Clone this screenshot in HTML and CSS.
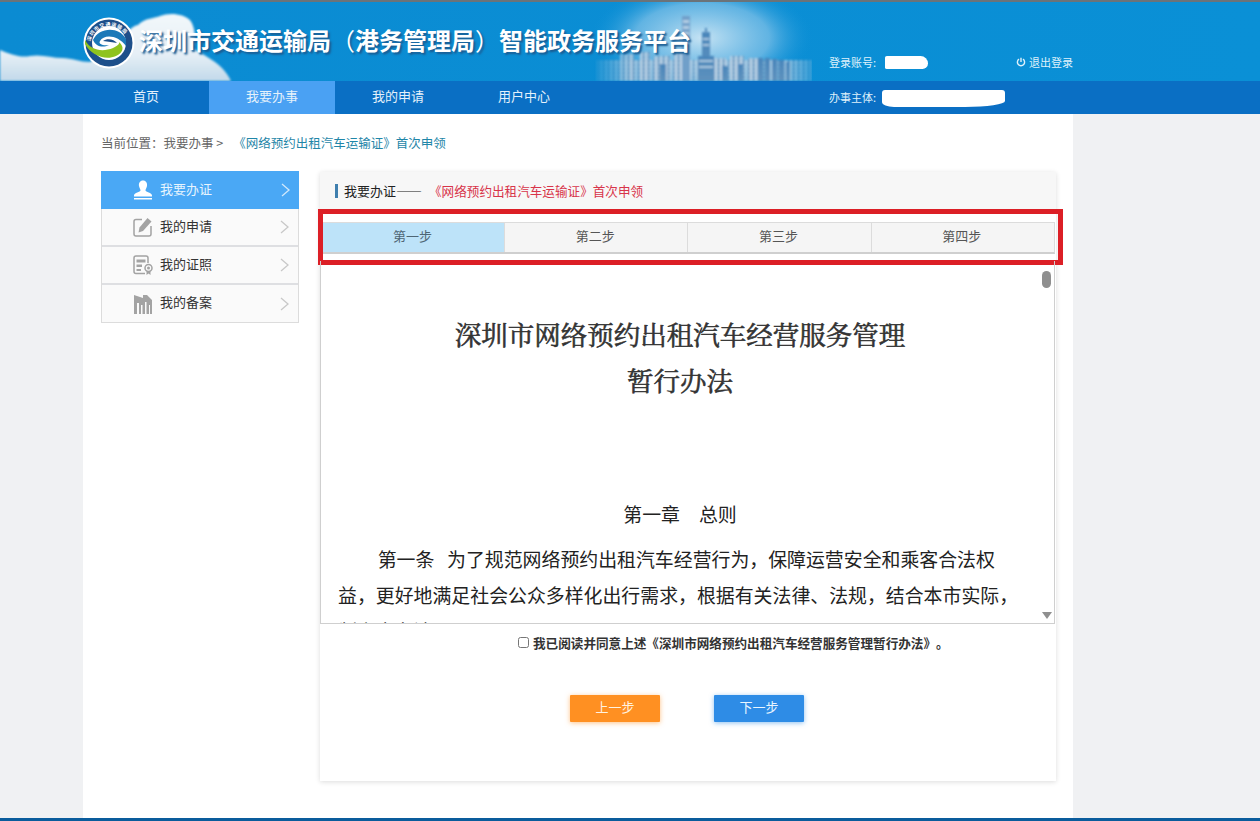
FILE: index.html
```html
<!DOCTYPE html>
<html lang="zh-CN">
<head>
<meta charset="utf-8">
<title>深圳市交通运输局（港务管理局）智能政务服务平台</title>
<link rel="stylesheet" href="styles.css">
</head>
<body>
<header class="masthead">
  <svg class="scenery" viewBox="0 0 1260 79" aria-hidden="true">
    <defs>
      <linearGradient id="cloud" x1="0" y1="0" x2="0" y2="1">
        <stop offset="0" stop-color="#f2f7fa"/>
        <stop offset="0.6" stop-color="#e6eff6"/>
        <stop offset="1" stop-color="#c2d9ea"/>
      </linearGradient>
      <radialGradient id="glow" cx="0.5" cy="0.5" r="0.5">
        <stop offset="0" stop-color="#cfe7f5" stop-opacity="0.95"/>
        <stop offset="0.6" stop-color="#86c4e9" stop-opacity="0.7"/>
        <stop offset="1" stop-color="#0a8fd6" stop-opacity="0"/>
      </radialGradient>
      <linearGradient id="tower" x1="0" y1="0" x2="0" y2="1">
        <stop offset="0" stop-color="#4a86bb"/>
        <stop offset="1" stop-color="#5f92bd"/>
      </linearGradient>
      <linearGradient id="fade" x1="590" y1="0" x2="812" y2="0" gradientUnits="userSpaceOnUse">
        <stop offset="0" stop-color="#000"/>
        <stop offset="0.2" stop-color="#fff"/>
        <stop offset="0.88" stop-color="#fff"/>
        <stop offset="1" stop-color="#555"/>
      </linearGradient>
      <mask id="cityfade" maskUnits="userSpaceOnUse" x="590" y="0" width="222" height="79"><rect x="590" y="0" width="222" height="79" fill="url(#fade)"/></mask>
      <pattern id="windows" width="5" height="4" patternUnits="userSpaceOnUse">
        <rect width="5" height="4" fill="#8db2d2"/>
        <rect x="0" width="2" height="4" fill="#c4d8e8"/>
        <rect x="3" y="2" width="1.500" height="2" fill="#5f8fb8"/>
      </pattern>
      <filter id="soft"><feGaussianBlur stdDeviation="0.8"/></filter>
      <filter id="softer"><feGaussianBlur stdDeviation="1.200"/></filter>
    </defs>
    <path class="cloud-shape" filter="url(#softer)" d="M0 48 C10 52 20 56 30 54 C42 52 52 56 62 56 C72 56 80 60 90 60 L120 40 C126 30 132 24 138 23 C144 16 156 16 160 14 C170 10 184 12 190 18 C196 26 196 40 192 46 C202 52 214 58 222 66 C226 70 229 75 231 79 L0 79 Z"/>
    <ellipse class="glow" cx="702" cy="36" rx="112" ry="58"/>
    <g filter="url(#soft)" mask="url(#cityfade)">
      <rect class="city-band" x="596" y="58" width="216" height="21"/>
      <g class="city-far">
        <rect x="620" y="52" width="14" height="27"/><rect x="640" y="50" width="10" height="29"/>
        <rect x="654" y="54" width="16" height="25"/><rect x="674" y="50" width="8" height="29"/>
        <rect x="714" y="56" width="12" height="23"/><rect x="730" y="54" width="14" height="25"/>
        <rect x="748" y="56" width="10" height="23"/>
      </g>
      <rect class="tower-light" x="682" y="14" width="8" height="65"/>
      <g class="city-near">
        <rect x="702" y="30" width="8" height="49"/><rect x="705" y="26" width="2" height="5"/>
        <rect x="698" y="54" width="16" height="25"/><rect x="660" y="62" width="6" height="17"/>
        <rect x="722" y="64" width="6" height="15"/><rect x="738" y="62" width="5" height="17"/>
        <rect x="758" y="56" width="5" height="23"/><rect x="765" y="56" width="5" height="23"/>
        <rect x="772" y="57" width="5" height="22"/><rect x="779" y="58" width="5" height="21"/>
        <rect x="786" y="60" width="4" height="19"/>
      </g>
      <path class="roofs" d="M683 18h6v3h-6zM683 24h6v3h-6zM683 30h6v3h-6zM703 36h6v2h-6zM703 42h6v2h-6zM699 58h14v2h-14zM699 64h14v2h-14z"/>
    </g>
  </svg>
  <div class="masthead-inner">
    <svg class="logo" viewBox="0 0 52 52" role="img" aria-label="徽标">
      <defs><path id="ring" d="M7 28 A19 19 0 0 1 45 28"/></defs>
      <circle cx="26" cy="26" r="25.500" fill="#fff"/>
      <circle cx="26" cy="26" r="23.500" fill="#1d4f8a"/>
      <circle cx="26" cy="26" r="17" fill="#fff"/>
      <text class="logo-text"><textPath href="#ring" startOffset="6%">深圳市交通运输局</textPath></text>
      <path d="M10 23 C16 10 36 9 43 22 L43 29 C35 18 21 17 17 24 C15 27 20 29 26 28 C20 31 13 30 10 23 Z" fill="#1b79b8"/>
      <path d="M2 23 C8 34 20 35 30 31 C34 29 37 27 36 25 C42 30 40 36 33 39 C22 44 8 38 2 27 Z" fill="#8fc31f"/>
      <path d="M20 24 C24 21 31 22 34 26 C30 25 25 25 20 24 Z" fill="#1d4f8a"/>
    </svg>
    <h1 class="site-title">深圳市交通运输局<span class="paren">（</span>港务管理局<span class="paren">）</span>智能政务服务平台</h1>
    <div class="account">
      <span class="account-id">登录账号:<span class="mask mask-id"></span></span>
      <a class="logout">
        <svg class="power" viewBox="0 0 10 10" aria-hidden="true"><path d="M3 2.200 A3.600 3.600 0 1 0 7 2.200 M5 .8 V5"/></svg>退出登录</a>
    </div>
  </div>
</header>

<nav class="mainnav">
  <div class="mainnav-inner">
    <a class="nav-item">首页</a>
    <a class="nav-item is-active">我要办事</a>
    <a class="nav-item">我的申请</a>
    <a class="nav-item">用户中心</a>
    <div class="subject">办事主体:<span class="mask mask-subject"></span></div>
  </div>
</nav>

<main class="page">
  <div class="breadcrumb">当前位置：我要办事 &gt;<a class="crumb-link">《网络预约出租汽车运输证》首次申领</a></div>
  <div class="columns">
    <aside class="sidemenu">
      <a class="side-item is-active">
        <svg class="side-icon" viewBox="0 0 20 20" aria-hidden="true"><path class="fill-white" d="M10 0.500 C13 0.500 14.500 3 14 6 C13.700 8 12.500 9 12.500 10.500 C12.500 12 19 12.500 19 15.500 L19 16.500 L1 16.500 L1 15.500 C1 12.500 7.500 12 7.500 10.500 C7.500 9 6.300 8 6 6 C5.500 3 7 .5 10 .5 Z M1 18 H19 V19.500 H1 Z"/></svg>
        <span>我要办证</span>
        <svg class="chev" viewBox="0 0 9 14" aria-hidden="true"><path d="M1 1 L8 7 L1 13"/></svg>
      </a>
      <a class="side-item">
        <svg class="side-icon" viewBox="0 0 20 20" aria-hidden="true"><path class="line" d="M9 2.500 H3 Q1 2.500 1 4.500 V17 Q1 19 3 19 H16 Q18 19 18 17 V9"/><path class="fill-gray" d="M14.500 1 L18.500 4.500 L10 14 L5.500 15.500 L6.500 10.500 Z"/></svg>
        <span>我的申请</span>
        <svg class="chev" viewBox="0 0 9 14" aria-hidden="true"><path d="M1 1 L8 7 L1 13"/></svg>
      </a>
      <a class="side-item">
        <svg class="side-icon" viewBox="0 0 20 20" aria-hidden="true"><path class="line" d="M12 18.500 H3 Q1 18.500 1 16.500 V3 Q1 1 3 1 H13 Q15 1 15 3 V8"/><path class="fill-gray" d="M3.500 4.500 H12.500 V7.500 H3.500 Z M3.500 9.500 H9 V12 H3.500 Z M3.500 14 H8 V16 H3.500 Z"/><circle class="line" cx="15.500" cy="13" r="3.500"/><circle class="fill-gray" cx="15.500" cy="13" r="1.500"/><path class="fill-gray" d="M13.500 16.500 H17.500 V20 L15.500 18.500 L13.500 20 Z"/></svg>
        <span>我的证照</span>
        <svg class="chev" viewBox="0 0 9 14" aria-hidden="true"><path d="M1 1 L8 7 L1 13"/></svg>
      </a>
      <a class="side-item">
        <svg class="side-icon" viewBox="0 0 20 20" aria-hidden="true"><path class="fill-gray" d="M1 1 L10 4 V1 H14 L19 6 V20 H1 Z"/><path class="fill-white" d="M4 9 H6 V20 H4 Z M8 11 H9.500 V20 H8 Z M12 8 H13.500 V20 H12 Z M16 11 H17 V20 H16 Z"/></svg>
        <span>我的备案</span>
        <svg class="chev" viewBox="0 0 9 14" aria-hidden="true"><path d="M1 1 L8 7 L1 13"/></svg>
      </a>
    </aside>

    <section class="panel">
      <div class="panel-head"><span class="panel-label">我要办证——</span><span class="panel-name">《网络预约出租汽车运输证》首次申领</span></div>
      <div class="steps-wrap">
        <ol class="steps">
          <li class="step is-current">第一步</li>
          <li class="step">第二步</li>
          <li class="step">第三步</li>
          <li class="step">第四步</li>
        </ol>
        <div class="highlight"></div>
      </div>
      <div class="doc">
        <h2 class="doc-title">深圳市网络预约出租汽车经营服务管理<br>暂行办法</h2>
        <h3 class="doc-chapter">第一章&emsp;总则</h3>
        <p class="doc-para">第一条&nbsp;&nbsp;&nbsp;为了规范网络预约出租汽车经营行为，保障运营安全和乘客合法权益，更好地满足社会公众多样化出行需求，根据有关法律、法规，结合本市实际，制定本办法。</p>
        <span class="scroll-thumb"></span>
        <span class="scroll-down"></span>
      </div>
      <label class="agree"><input class="agree-box" type="checkbox">我已阅读并同意上述《深圳市网络预约出租汽车经营服务管理暂行办法》。</label>
      <div class="actions">
        <button class="btn btn-prev" type="button">上一步</button>
        <button class="btn btn-next" type="button">下一步</button>
      </div>
    </section>
  </div>
</main>
<div class="bottom-bar"></div>
</body>
</html>
```
FILE: styles.css
```css
* { box-sizing: border-box; }
html, body { height: 100%; }
body {
  margin: 0;
  height: 821px;
  overflow: hidden;
  display: flex;
  flex-direction: column;
  background: #f0f1f3;
  color: #333;
  font-family: "Noto Sans CJK SC", "Liberation Sans", sans-serif;
  font-size: 13px;
  text-spacing-trim: space-all;
}
a { color: inherit; text-decoration: none; }

/* masthead */
.masthead {
  position: relative;
  flex: none;
  height: 81px;
  border-top: 2px solid #6b7379;
  background: linear-gradient(90deg, #0b8bd2, #0a90d6);
  overflow: hidden;
}
.scenery { position: absolute; left: 0; top: 0; width: 1260px; height: 79px; }
.cloud-shape { fill: url(#cloud); }
.glow { fill: url(#glow); }
.city-band { fill: url(#windows); opacity: .75; }
.city-far { fill: url(#windows); opacity: .85; }
.city-near { fill: url(#tower); }
.tower-light { fill: #6f9fc9; }
.roofs { fill: #cfe2f0; opacity: .7; }

.masthead-inner {
  position: relative;
  width: 990px;
  height: 79px;
  margin-left: 83px;
  display: flex;
  align-items: flex-start;
}
.logo { flex: none; width: 52px; height: 52px; margin-top: 15px; }
.logo-text { font-size: 5px; font-weight: 700; fill: #fff; letter-spacing: .6px; }
.site-title {
  margin: 21px 0 0 4px;
  font-size: 24px;
  line-height: 34px;
  font-weight: 700;
  color: #fff;
  white-space: nowrap;
  text-shadow: 2px 2px 2px #1b5c92;
}
.paren { font-family: "Noto Sans CJK TC", sans-serif; font-weight: 400; }
.account {
  margin-left: auto;
  width: 244px;
  height: 100%;
  padding-top: 51px;
  display: flex;
  justify-content: space-between;
  align-items: flex-start;
  font-size: 11px;
  line-height: 18px;
  color: #dff1fb;
}
.account-id { display: flex; align-items: center; }
.logout { display: flex; align-items: center; gap: 3px; }
.power { width: 10px; height: 10px; fill: none; stroke: #dff1fb; stroke-width: 1.400; }
.mask { display: inline-block; background: #fff; }
.mask-id { width: 43px; height: 13px; margin-left: 9px; border-radius: 2px 8px 6px 2px; }
.mask-subject { width: 123px; height: 17px; margin: 4px 0 0 6px; border-radius: 3px 3px 40px 12px / 3px 3px 6px 5px; }

/* nav */
.mainnav { flex: none; height: 33px; background: #0a6fc4; }
.mainnav-inner { width: 990px; height: 100%; margin-left: 83px; display: flex; align-items: stretch; }
.nav-item {
  width: 126px;
  padding-bottom: 5px;
  display: flex;
  align-items: center;
  justify-content: center;
  color: #e4f1fb;
  font-size: 13px;
}
.nav-item.is-active { background: #4aa1f3; }
.subject {
  margin-left: auto;
  width: 244px;
  padding-bottom: 2px;
  display: flex;
  align-items: center;
  font-size: 11px;
  color: #dff1fb;
}

/* page */
.page {
  flex: 1;
  width: 990px;
  margin-left: 83px;
  background: #fff;
  padding: 19px 17px 0 18px;
  min-height: 0;
}
.breadcrumb { height: 20px; line-height: 20px; font-size: 12.500px; color: #666; white-space: nowrap; }
.crumb-link { margin-left: 10px; color: #1f86a8; }
.columns { display: flex; align-items: flex-start; margin-top: 18px; }

.sidemenu {
  flex: none;
  width: 198px;
  border: 1px solid #dcdcdc;
  border-top: 0;
  background: #fafafa;
}
.side-item {
  position: relative;
  height: 38px;
  display: flex;
  align-items: center;
  padding-left: 31px;
  color: #333;
  border-bottom: 2px solid #dedfe2;
}
.side-item:last-child { height: 37px; border-bottom: 0; }
.side-item span { margin: -4px 0 0 7px; }
.side-item.is-active { margin: 0 -1px; padding-left: 32px; background: #4aa8f5; color: #e6f4fe; border-bottom: 0; }
.side-item.is-active span { margin-top: -4px; }
.side-icon { flex: none; width: 20px; height: 20px; }
.fill-white { fill: #fff; }
.side-item:not(.is-active) .fill-white { fill: #fafafa; }
.fill-gray { fill: #a3a3a3; }
.line { fill: none; stroke: #a3a3a3; stroke-width: 1.500; }
.chev {
  margin-left: auto;
  margin-right: 9px;
  width: 9px;
  height: 14px;
  fill: none;
  stroke: #c8c8c8;
  stroke-width: 1.300;
}
.is-active .chev { stroke: #cfe8fc; }

.panel {
  flex: none;
  width: 736px;
  height: 609px;
  margin-left: 21px;
  margin-top: 1px;
  background: #fff;
  box-shadow: 0 1px 5px rgba(0, 0, 0, .14);
  display: flex;
  flex-direction: column;
}
.panel-head {
  flex: none;
  height: 37px;
  padding-left: 15px;
  display: flex;
  align-items: center;
  background: #f7f7f7;
  font-size: 13px;
  white-space: nowrap;
}
.panel-label { padding-left: 6px; border-left: 3px solid #3f7fae; line-height: 14px; color: #222; }
.panel-name { margin-left: 7px; font-size: 12.600px; color: #d8344a; }

.steps-wrap { position: relative; flex: none; padding: 13px 1px 0 3px; height: 52px; }
.steps {
  margin: 0;
  padding: 0;
  list-style: none;
  display: flex;
  height: 32px;
  border: 1px solid #dcdcdc;
  border-left: 0;
  border-bottom: 2px solid #cfcfcf;
  background: #f5f5f5;
}
.step {
  flex: 1;
  padding: 0 2px 4px 0;
  display: flex;
  align-items: center;
  justify-content: center;
  color: #555;
  border-left: 1px solid #dcdcdc;
}
.step.is-current { flex: none; width: 181px; background: #bde3f9; color: #4f6675; border-left: 0; }
.highlight {
  position: absolute;
  left: -2px;
  right: -7px;
  top: 0;
  height: 56px;
  border: 5px solid #dc1f26;
  pointer-events: none;
}

.doc {
  position: relative;
  flex: none;
  height: 363px;
  overflow: hidden;
  border: 1px solid #cfcfcf;
  border-top: 0;
  margin-right: 1px;
  padding: 50px 32px 0 17px;
  color: #222;
  font-family: "Noto Serif CJK SC", "Noto Sans CJK SC", serif;
}
.doc-title {
  margin: 0;
  font-size: 26.500px;
  line-height: 46px;
  font-weight: 400;
  -webkit-text-stroke: .6px #333;
  text-align: center;
  color: #333;
}
.doc-chapter {
  margin: 88px 0 0;
  font-size: 18.900px;
  line-height: 45px;
  font-weight: 400;
  text-align: center;
  font-family: "Noto Sans CJK SC", sans-serif;
}
.doc-para {
  margin: 5px 0 0;
  font-size: 18.900px;
  line-height: 36px;
  text-indent: 2.100em;
  font-family: "Noto Sans CJK SC", sans-serif;
  width: 684px;
}
.scroll-thumb {
  position: absolute;
  right: 3px;
  top: 10px;
  width: 9px;
  height: 17px;
  border-radius: 5px;
  background: #8f8f8f;
}
.scroll-down {
  position: absolute;
  right: 2px;
  bottom: 4px;
  width: 0;
  height: 0;
  border-left: 5px solid transparent;
  border-right: 5px solid transparent;
  border-top: 7px solid #8f8f8f;
}

.agree {
  margin: 9px 0 0 198px;
  display: flex;
  align-items: center;
  height: 18px;
  font-size: 12.600px;
  font-weight: 700;
  color: #333;
  white-space: nowrap;
}
.agree-box { width: 11px; height: 11px; margin: 0 4px 0 0; }
.actions { display: flex; gap: 54px; margin: 44px 0 0 250px; }
.btn {
  width: 90px;
  height: 27px;
  padding: 0 0 4px;
  border: 0;
  border-radius: 1px;
  font: inherit;
  color: #fff3e2;
}
.btn-prev { background: #ff9022; box-shadow: 0 1px 5px rgba(255, 144, 34, .55); }
.btn-next { background: #2e8ce6; box-shadow: 0 1px 5px rgba(46, 140, 230, .55); color: #e9f5ff; }

.bottom-bar { flex: none; height: 3px; background: #0a5c9c; }
```
